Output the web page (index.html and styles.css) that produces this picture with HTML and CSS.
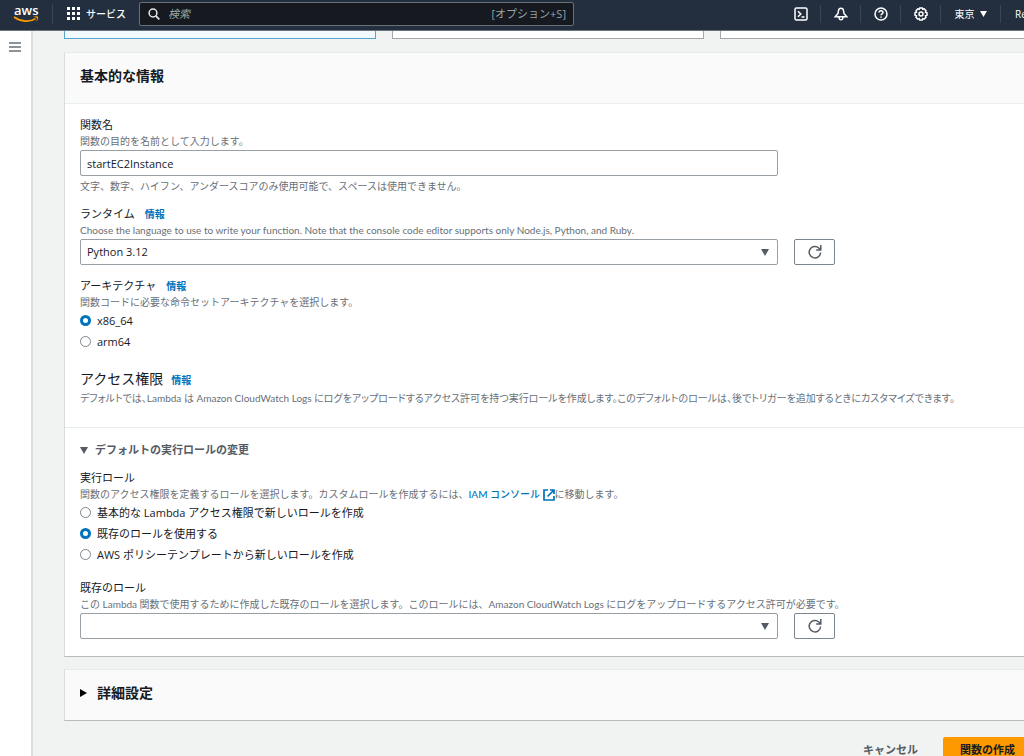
FILE: index.html
```html
<!DOCTYPE html>
<html lang="ja">
<head>
<meta charset="utf-8">
<meta name="viewport" content="width=device-width, initial-scale=1">
<title>関数の作成 - Lambda</title>
<link rel="stylesheet" href="styles.css">
</head>
<body>
<div class="page">
  <header class="topbar">
    <a class="logo" href="#" aria-label="AWS ホーム">
      <span class="logo-word">aws</span>
      <svg class="logo-smile" viewBox="0 0 26 8" aria-hidden="true"><path d="M1 1c7 5 16 5.500 21.500 1.600" fill="none" stroke="#f90" stroke-width="1.700"/><path d="M20 .8c2-.8 4.500-.8 5 0s-.3 3.500-1.800 5c.3-1.500 1-3.200.6-3.900s-2.300-.7-3.800-1.100z" fill="#f90"/></svg>
    </a>
    <button class="services" type="button">
      <svg class="icon-grid" viewBox="0 0 13 13" aria-hidden="true"><path fill="#fff" d="M0 0h3v3H0zM5 0h3v3H5zM10 0h3v3h-3zM0 5h3v3H0zM5 5h3v3H5zM10 5h3v3h-3zM0 10h3v3H0zM5 10h3v3H5zM10 10h3v3h-3z"/></svg>
      サービス
    </button>
    <label class="search">
      <svg class="icon-search" viewBox="0 0 12 12" aria-hidden="true"><circle cx="5" cy="5" r="3.900" fill="none" stroke="#e5e9ea" stroke-width="1.500"/><path d="M7.800 7.800l3.500 3.500" stroke="#e5e9ea" stroke-width="1.700"/></svg>
      <input class="search-input" type="search" placeholder="検索" aria-label="検索">
      <span class="search-key">[オプション+S]</span>
    </label>
    <nav class="tools" aria-label="アカウント">
      <button class="tool" type="button" aria-label="CloudShell"><svg class="icon-tool" viewBox="0 0 14 14"><rect x="1" y="1" width="12" height="12" rx="1.500"/><path d="M4 4.200L6.800 7 4 9.800M7.500 10h3"/></svg></button>
      <button class="tool" type="button" aria-label="通知"><svg class="icon-tool" viewBox="0 0 14 14"><path d="M7 1.300C5.500 1.300 4.600 2.400 4.400 4L4 6.500 1.300 9.700h11.400L10 6.500 9.600 4C9.400 2.400 8.500 1.300 7 1.300zM5 10.500c.3 3 3.700 3 4 0"/></svg></button>
      <button class="tool" type="button" aria-label="ヘルプ"><svg class="icon-tool" viewBox="0 0 14 14"><circle cx="7" cy="7" r="6"/><path d="M5 5.600C5 3 9 3 9 5.500 9 6.900 7 6.800 7 8.300M7 9.400v1.400"/></svg></button>
      <button class="tool" type="button" aria-label="設定"><svg class="icon-tool" viewBox="0 0 14 14"><circle cx="7" cy="7" r="2"/><path d="M5.700 1h2.600l.5 1.300 1.400-.4 1.800 1.800-.5 1.500 1.500.5v2.600l-1.500.6.5 1.400-1.800 1.800-1.400-.5L8.300 13H5.700l-.5-1.400-1.400.5L2 10.300l.5-1.400L1 8.300V5.700l1.500-.5L2 3.700l1.800-1.800 1.400.4z"/></svg></button>
      <button class="tool region" type="button">東京 <svg class="icon-region" viewBox="0 0 8 7"><path d="M0 0h8L4 7z"/></svg></button>
      <button class="tool account" type="button">Re</button>
    </nav>
  </header>
  <div class="body">
    <aside class="rail">
      <button class="menu" type="button" aria-label="メニューを開く"><svg class="icon-menu" viewBox="0 0 12 10"><path d="M0 1h12M0 5h12M0 9h12" stroke="#687078" stroke-width="1.600"/></svg></button>
    </aside>
    <main class="main">
      <div class="choices"><div class="choice chosen"></div><div class="choice"></div><div class="choice"></div></div>

      <section class="panel">
        <h2 class="panel-head">基本的な情報</h2>
        <div class="panel-body">
          <div class="field">
            <label class="label" for="fn">関数名</label>
            <p class="desc">関数の目的を名前として入力します。</p>
            <div class="control-row"><input class="control" id="fn" type="text" value="startEC2Instance"></div>
            <p class="desc hint">文字、数字、ハイフン、アンダースコアのみ使用可能で、スペースは使用できません。</p>
          </div>
          <div class="field">
            <div class="label"><label for="rt">ランタイム</label><a class="info" href="#">情報</a></div>
            <p class="desc">Choose the language to use to write your function. Note that the console code editor supports only Node.js, Python, and Ruby.</p>
            <div class="control-row">
              <div class="select"><select class="control" id="rt"><option>Python 3.12</option></select><svg class="icon-down caret" viewBox="0 0 8 7"><path d="M0 0h8L4 7z"/></svg></div>
              <button class="refresh" type="button" aria-label="ランタイムを更新"><svg class="icon-refresh" viewBox="0 0 14 14"><path d="M12.600 7.500A5.700 5.700 0 1 1 10.800 3l1.300 1.300M12.800 0v5H8.200"/></svg></button>
            </div>
          </div>
          <div class="field" role="radiogroup" aria-labelledby="arch">
            <div class="label"><span id="arch">アーキテクチャ</span><a class="info" href="#">情報</a></div>
            <p class="desc">関数コードに必要な命令セットアーキテクチャを選択します。</p>
            <div class="radios">
              <label class="option"><input class="radio" type="radio" name="arch" checked>x86_64</label>
              <label class="option"><input class="radio" type="radio" name="arch">arm64</label>
            </div>
          </div>
          <div class="access">
            <h3 class="access-title">アクセス権限<a class="info" href="#">情報</a></h3>
            <p class="desc access-desc">デフォルトでは、Lambda は Amazon CloudWatch Logs にログをアップロードするアクセス許可を持つ実行ロールを作成します。このデフォルトのロールは、後でトリガーを追加するときにカスタマイズできます。</p>
          </div>
        </div>
        <details class="role" open>
          <summary class="role-head"><svg class="icon-down" viewBox="0 0 8 7"><path d="M0 0h8L4 7z"/></svg>デフォルトの実行ロールの変更</summary>
          <div class="field" role="radiogroup" aria-labelledby="role">
            <div class="label" id="role">実行ロール</div>
            <p class="desc">関数のアクセス権限を定義するロールを選択します。カスタムロールを作成するには、<a class="link" href="#">IAM コンソール <svg class="icon-ext" viewBox="0 0 12 12"><path d="M5 1H1v10h10V7M7 1h4v4M11 1L4.500 7.500"/></svg></a>に移動します。</p>
            <div class="radios">
              <label class="option"><input class="radio" type="radio" name="role">基本的な Lambda アクセス権限で新しいロールを作成</label>
              <label class="option"><input class="radio" type="radio" name="role" checked>既存のロールを使用する</label>
              <label class="option"><input class="radio" type="radio" name="role">AWS ポリシーテンプレートから新しいロールを作成</label>
            </div>
          </div>
          <div class="field existing">
            <label class="label" for="er">既存のロール</label>
            <p class="desc">この Lambda 関数で使用するために作成した既存のロールを選択します。このロールには、Amazon CloudWatch Logs にログをアップロードするアクセス許可が必要です。</p>
            <div class="control-row">
              <div class="select"><select class="control" id="er"><option></option></select><svg class="icon-down caret" viewBox="0 0 8 7"><path d="M0 0h8L4 7z"/></svg></div>
              <button class="refresh" type="button" aria-label="ロールを更新"><svg class="icon-refresh" viewBox="0 0 14 14"><path d="M12.600 7.500A5.700 5.700 0 1 1 10.800 3l1.300 1.300M12.800 0v5H8.200"/></svg></button>
            </div>
          </div>
        </details>
      </section>

      <details class="panel">
        <summary class="panel-head advanced"><svg class="icon-right" viewBox="0 0 7 8"><path d="M0 0v8l7-4z"/></svg>詳細設定</summary>
      </details>

      <div class="actions">
        <button class="btn" type="button">キャンセル</button>
        <button class="btn primary" type="submit">関数の作成</button>
      </div>
    </main>
  </div>
</div>
</body>
</html>
```
FILE: styles.css
```css
* { box-sizing: border-box; }
html, body { height: 100%; margin: 0; }
body {
  overflow: hidden;
  background: #f1f3f3;
  color: #16191f;
  font-family: "Open Sans", "Noto Sans CJK JP", sans-serif;
  font-size: 11px;
  line-height: 18px;
}
h2, h3, p { margin: 0; }
button, input, select { font: inherit; color: inherit; }
button { padding: 0; border: 0; background: none; }
svg { flex: none; display: block; }
a { color: #0073bb; text-decoration: none; }
summary { list-style: none; }

.page { display: flex; flex-direction: column; min-width: 1048px; min-height: 100%; }

.topbar {
  display: flex;
  align-items: center;
  height: 31px;
  padding-bottom: 3px;
  background: #232f3e;
  border-bottom: 1px solid #6b737c;
  color: #fff;
}
.logo { width: 53px; height: 20px; padding-left: 13px; border-right: 1px solid #3a4553; color: #fff; }
.logo-word { display: block; padding-left: 1px; font: 600 13px/12px "Open Sans", sans-serif; }
.logo-smile { width: 26px; height: 8px; }
.services { display: flex; align-items: center; gap: 6px; width: 86px; padding-left: 14px; font-size: 10px; font-weight: 500; white-space: nowrap; }
.icon-grid { width: 13px; height: 13px; }
.search {
  display: flex;
  align-items: center;
  gap: 8px;
  width: 435px;
  height: 24px;
  padding: 0 7px 0 8px;
  border: 1px solid #687078;
  border-radius: 2px;
  background: #16191f;
  color: #95a5a6;
}
.icon-search { width: 12px; height: 12px; }
.search-input { flex: 1; min-width: 0; padding: 0; border: 0; outline: 0; background: none; appearance: none; }
.search-input::placeholder { color: #95a5a6; font-style: italic; opacity: 1; }
.tools { display: flex; margin-left: auto; }
.tool { display: flex; align-items: center; justify-content: center; width: 40px; height: 18px; border-right: 1px solid #3a4553; font-size: 10px; }
.icon-tool { width: 14px; height: 14px; fill: none; stroke: #fff; stroke-width: 1.500; }
.region { gap: 5px; width: 60px; }
.icon-region { width: 7px; height: 6px; fill: #fff; }
.account { width: 47px; border: 0; justify-content: flex-start; padding-left: 14px; }
.icon-down { width: 8px; height: 7px; fill: currentColor; }

.body { display: flex; flex: 1; }
.rail { flex: none; width: 33px; background: #fff; border-right: 2px solid #dcdfdf; }
.menu { display: block; padding: 11px 9px; }
.icon-menu { width: 12px; height: 10px; }
.main { flex: 1; min-width: 0; padding: 0 16px 0 31px; }

.choices { display: grid; grid-template-columns: repeat(3, 1fr); gap: 16px; margin-bottom: 13px; }
.choice { height: 8px; border: 1px solid #a2a8ad; border-top: 0; background: #fff; }
.chosen { border-color: #58a5d2; background: #f1faff; }

.panel {
  margin-bottom: 12px;
  background: #fff;
  border: 1px solid #e7eaea;
  border-bottom: 1px solid #b5bdbd;
  border-left-color: #d8dddd;
}
.panel-head {
  padding: 11px 15px 15px;
  background: #fafafa;
  font-size: 14px;
  font-weight: 700;
  line-height: 24px;
}
.panel-body { padding: 12px 15px 22px; border-top: 1px solid #eaeded; border-bottom: 1px solid #eaeded; }
.field { margin-bottom: 12px; }
.label { display: block; }
.info { margin-left: 10px; font-size: 10px; font-weight: 700; }
.desc {
  color: #687078;
  font-family: Lato, "Noto Sans CJK JP", sans-serif;
  font-size: 10px;
  font-feature-settings: "pkna";
  line-height: 14px;
  white-space: nowrap;
}
.hint { margin-top: 3px; }
.control-row { display: flex; gap: 16px; width: 755px; margin-top: 2px; }
.control {
  display: block;
  width: 698px;
  height: 26px;
  padding: 0 6px;
  border: 1px solid #98a0a6;
  border-radius: 2px;
  background: #fff;
  appearance: none;
}
.select { display: grid; align-items: center; }
.select > * { grid-area: 1 / 1; }
.caret { justify-self: end; margin-right: 9px; color: #545b64; pointer-events: none; }
.refresh { display: grid; place-items: center; width: 41px; height: 26px; border: 1px solid #7d858c; border-radius: 2px; }
.icon-refresh { width: 14px; height: 14px; fill: none; stroke: #545b64; stroke-width: 1.500; }
.radios { padding-top: 1px; }
.option { display: flex; align-items: center; gap: 6px; height: 21px; }
.radio { width: 11px; height: 11px; margin: 0; border: 1px solid #7d858c; border-radius: 50%; background: #fff; appearance: none; }
.radio:checked { border: 3px solid #0073bb; }
.access { margin-top: 16px; }
.access-title { font-size: 14px; font-weight: 400; line-height: 22px; }
.access-title .info { margin-left: 8px; }
.access-desc { font-feature-settings: "palt"; }

.role { padding: 13px 15px 5px; }
.role-head { display: flex; align-items: center; gap: 7px; margin-bottom: 10px; color: #545b64; font-weight: 700; }
.link { font-weight: 500; }
.icon-ext { display: inline-block; width: 12px; height: 12px; vertical-align: bottom; fill: none; stroke: #0073bb; stroke-width: 1.700; }
.existing { margin-top: 14px; }
.advanced { display: flex; align-items: center; gap: 10px; }
.icon-right { width: 7px; height: 8px; }

.actions { display: flex; justify-content: flex-end; gap: 8px; padding-top: 4px; }
.btn { height: 26px; padding: 0 17px; border-radius: 2px; color: #545b64; font-weight: 700; }
.primary { background: #f90; color: #16191f; }
```
